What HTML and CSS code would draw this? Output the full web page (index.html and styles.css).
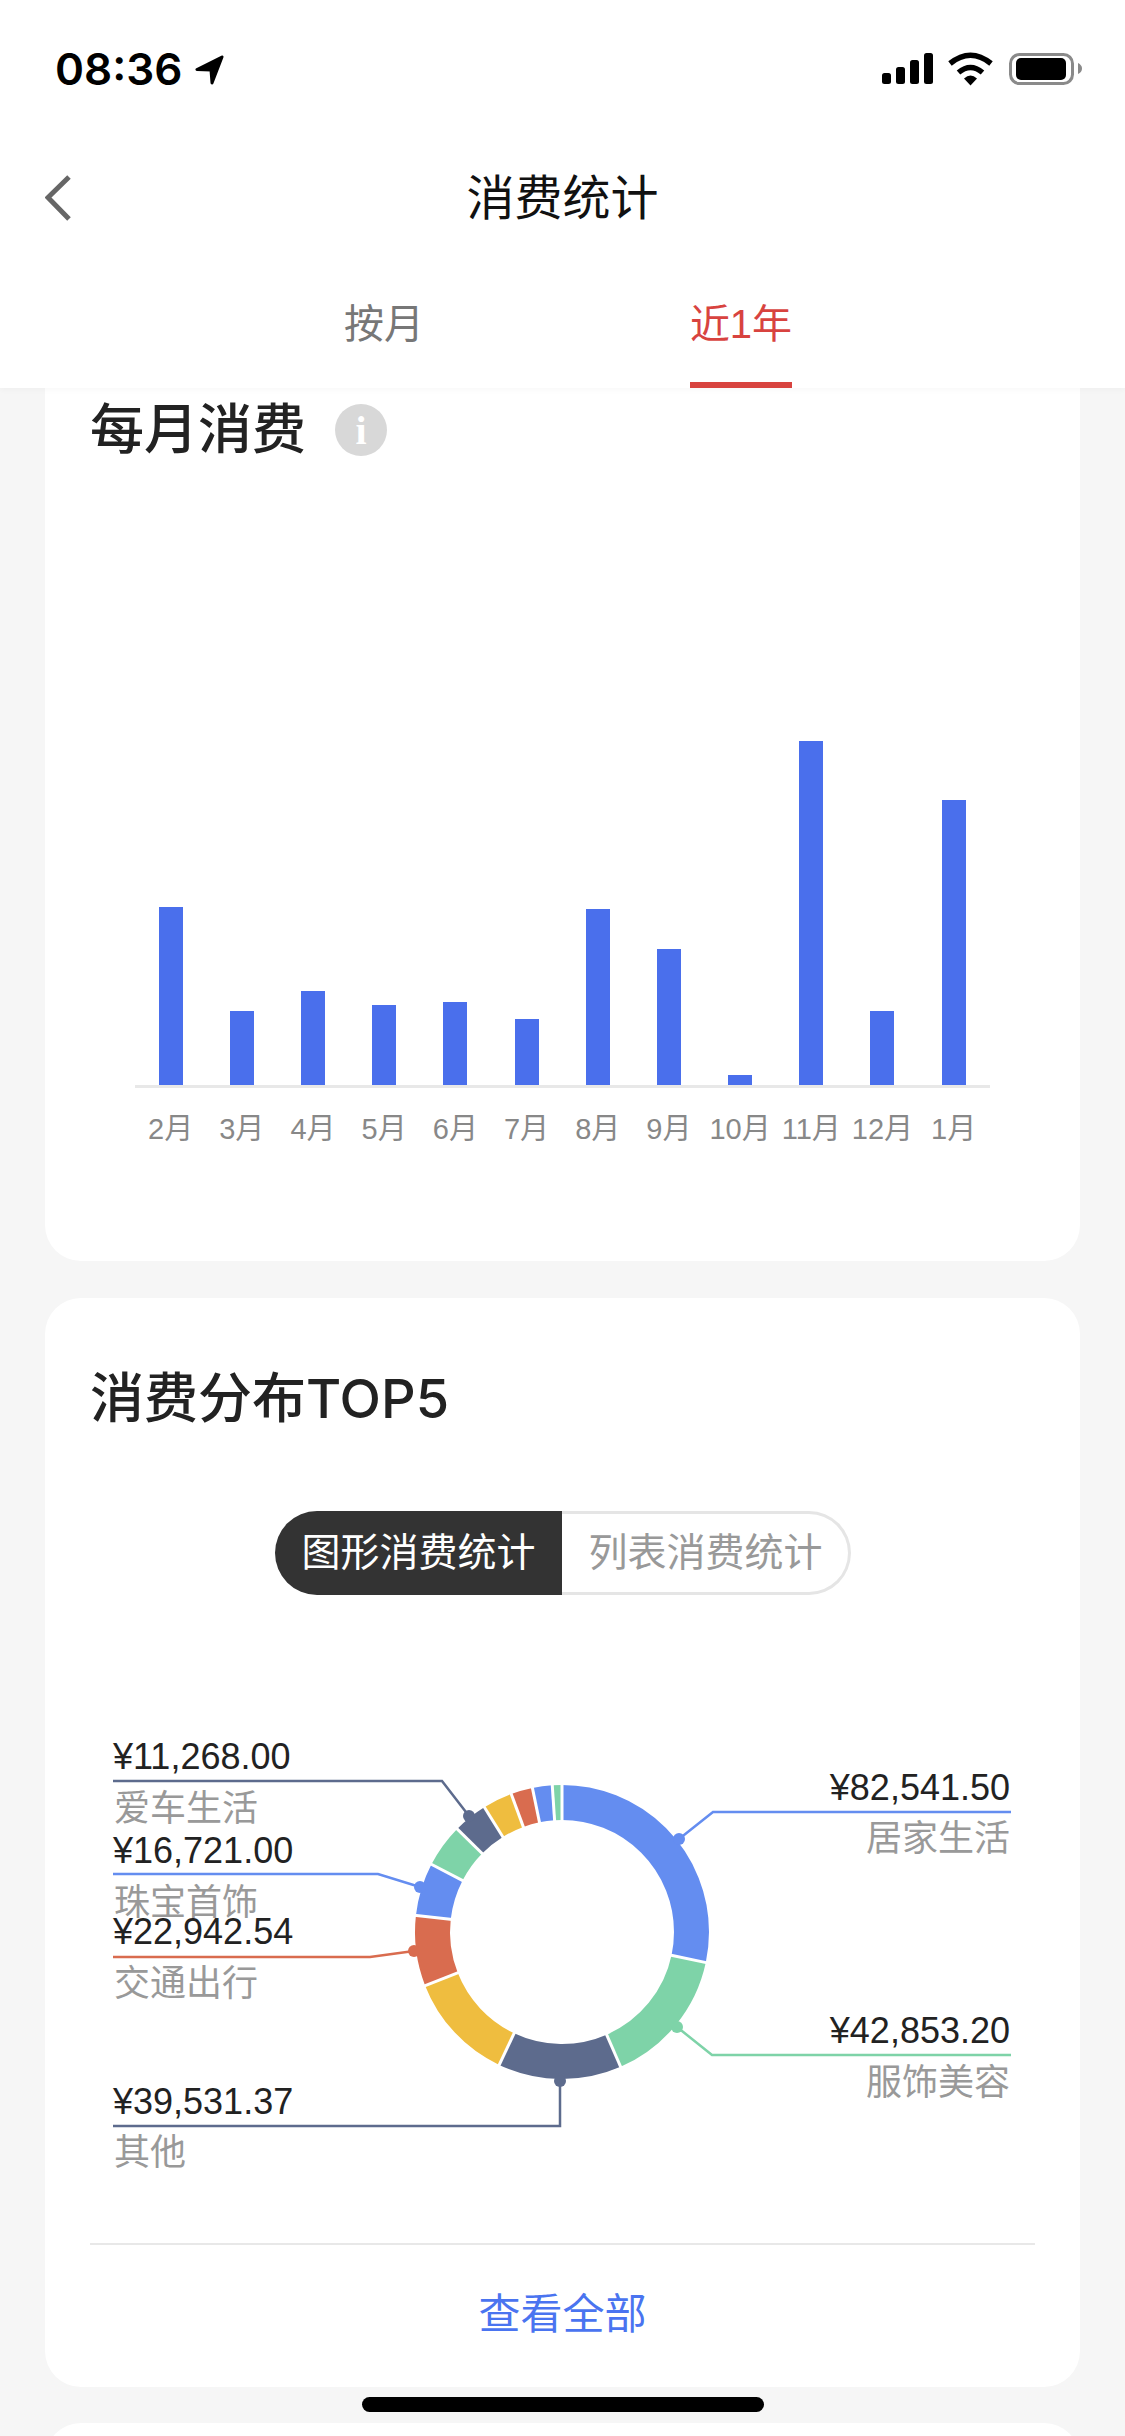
FILE: index.html
```html
<!DOCTYPE html>
<html lang="zh-CN">
<head>
<meta charset="utf-8">
<title>消费统计</title>
<link rel="stylesheet" href="styles.css">
</head>
<body>
<header class="top">
  <div class="status">
    <div class="clock">
      <span class="time">08:36</span>
      <svg class="loc" width="30" height="32" viewBox="0 0 30 32"><path d="M27 3 L2 15.500 L16 16 L17 29 Z" fill="#000" stroke="#000" stroke-width="3" stroke-linejoin="round"/></svg>
    </div>
    <svg class="sys" width="200" height="34" viewBox="882 52 200 34">
      <rect x="882" y="73" width="9" height="11" rx="2.500"/>
      <rect x="896" y="67" width="9" height="17" rx="2.500"/>
      <rect x="910" y="60" width="9" height="24" rx="2.500"/>
      <rect x="924" y="53" width="9" height="31" rx="2.500"/>
      <path d="M950 63.500 Q970.500 47 991 63.500" fill="none" stroke="#000" stroke-width="5.500"/>
      <path d="M958.500 72.500 Q970.500 62.500 982.500 72.500" fill="none" stroke="#000" stroke-width="5.500"/>
      <path d="M964 78.500 Q970.500 72.500 977 78.500 L970.500 85.500 Z"/>
      <rect x="1010.500" y="54.500" width="62" height="29" rx="9" fill="none" stroke="#8a8a8a" stroke-width="3"/>
      <rect x="1016" y="58" width="50" height="22" rx="5"/>
      <path d="M1078 63 Q1082 65 1082 68.500 Q1082 72 1078 74 Z" fill="#8a8a8a"/>
    </svg>
  </div>
  <nav class="nav">
    <svg class="back" width="30" height="50" viewBox="0 0 30 50"><path d="M24 4 L3 24.500 L24 46" fill="none" stroke="#666" stroke-width="5"/></svg>
    <h1 class="nav-title">消费统计</h1>
  </nav>
  <div class="tabs">
    <div class="tab"><span class="tab-label">按月</span></div>
    <div class="tab"><span class="tab-label is-active">近1年</span></div>
  </div>
</header>

<main>
  <section class="card card-monthly">
    <div class="card-head">
      <h2 class="card-title">每月消费</h2>
      <span class="info">i</span>
    </div>
    <div class="plot">
      <div class="col"><div class="bar" style="height:178px"></div></div>
      <div class="col"><div class="bar" style="height:74px"></div></div>
      <div class="col"><div class="bar" style="height:94px"></div></div>
      <div class="col"><div class="bar" style="height:80px"></div></div>
      <div class="col"><div class="bar" style="height:83px"></div></div>
      <div class="col"><div class="bar" style="height:66px"></div></div>
      <div class="col"><div class="bar" style="height:176px"></div></div>
      <div class="col"><div class="bar" style="height:136px"></div></div>
      <div class="col"><div class="bar" style="height:10px"></div></div>
      <div class="col"><div class="bar" style="height:344px"></div></div>
      <div class="col"><div class="bar" style="height:74px"></div></div>
      <div class="col"><div class="bar" style="height:285px"></div></div>
    </div>
    <div class="axis-labels">
      <span>2月</span><span>3月</span><span>4月</span><span>5月</span><span>6月</span><span>7月</span><span>8月</span><span>9月</span><span>10月</span><span>11月</span><span>12月</span><span>1月</span>
    </div>
  </section>

  <section class="card card-top">
    <h2 class="card-title card-title-top">消费分布<span class="latin">TOP5</span></h2>
    <div class="segments">
      <div class="segment is-on">图形消费统计</div>
      <div class="segment">列表消费统计</div>
    </div>
    <svg class="donut" width="1035" height="648" viewBox="45 1594 1035 648">
      <g fill="none" stroke-width="35">
        <circle class="s-blue" cx="562" cy="1931" r="129.500" pathLength="360" stroke-dasharray="102 360" transform="rotate(-90 562 1931)"/>
        <circle class="s-green" cx="562" cy="1931" r="129.500" pathLength="360" stroke-dasharray="54.500 360" transform="rotate(12 562 1931)"/>
        <circle class="s-slate" cx="562" cy="1931" r="129.500" pathLength="360" stroke-dasharray="48.800 360" transform="rotate(66.500 562 1931)"/>
        <circle class="s-yellow" cx="562" cy="1931" r="129.500" pathLength="360" stroke-dasharray="43.300 360" transform="rotate(115.300 562 1931)"/>
        <circle class="s-red" cx="562" cy="1931" r="129.500" pathLength="360" stroke-dasharray="27.900 360" transform="rotate(158.600 562 1931)"/>
        <circle class="s-blue" cx="562" cy="1931" r="129.500" pathLength="360" stroke-dasharray="20.900 360" transform="rotate(186.500 562 1931)"/>
        <circle class="s-green" cx="562" cy="1931" r="129.500" pathLength="360" stroke-dasharray="17.100 360" transform="rotate(207.400 562 1931)"/>
        <circle class="s-slate" cx="562" cy="1931" r="129.500" pathLength="360" stroke-dasharray="13.600 360" transform="rotate(224.500 562 1931)"/>
        <circle class="s-yellow" cx="562" cy="1931" r="129.500" pathLength="360" stroke-dasharray="11.700 360" transform="rotate(238.100 562 1931)"/>
        <circle class="s-red" cx="562" cy="1931" r="129.500" pathLength="360" stroke-dasharray="8.600 360" transform="rotate(249.800 562 1931)"/>
        <circle class="s-blue" cx="562" cy="1931" r="129.500" pathLength="360" stroke-dasharray="7.800 360" transform="rotate(258.400 562 1931)"/>
        <circle class="s-green" cx="562" cy="1931" r="129.500" pathLength="360" stroke-dasharray="3.800 360" transform="rotate(266.200 562 1931)"/>
      </g>
      <g class="gaps" transform="translate(562 1931)">
        <line y1="-108" y2="-151" transform="rotate(0)"/>
        <line y1="-108" y2="-151" transform="rotate(102)"/>
        <line y1="-108" y2="-151" transform="rotate(156.500)"/>
        <line y1="-108" y2="-151" transform="rotate(205.300)"/>
        <line y1="-108" y2="-151" transform="rotate(248.600)"/>
        <line y1="-108" y2="-151" transform="rotate(276.500)"/>
        <line y1="-108" y2="-151" transform="rotate(297.400)"/>
        <line y1="-108" y2="-151" transform="rotate(314.500)"/>
        <line y1="-108" y2="-151" transform="rotate(328.100)"/>
        <line y1="-108" y2="-151" transform="rotate(339.800)"/>
        <line y1="-108" y2="-151" transform="rotate(348.400)"/>
        <line y1="-108" y2="-151" transform="rotate(356.200)"/>
      </g>

      <g class="leader">
        <polyline class="l-slate" points="113,1780 442,1780 469,1815"/><circle class="f-slate" cx="469" cy="1815" r="6"/>
        <polyline class="l-blue" points="113,1873 378,1873 420,1886"/><circle class="f-blue" cx="420" cy="1886" r="6"/>
        <polyline class="l-red" points="113,1956 370,1956 414,1950"/><circle class="f-red" cx="414" cy="1950" r="6"/>
        <polyline class="l-slate" points="113,2125 560,2125 560,2080"/><circle class="f-slate" cx="560" cy="2080" r="6"/>
        <polyline class="l-blue" points="1011,1811 713,1811 679,1838"/><circle class="f-blue" cx="679" cy="1838" r="6"/>
        <polyline class="l-green" points="1011,2054 712,2054 677,2026"/><circle class="f-green" cx="677" cy="2026" r="6"/>
      </g>

      <text class="amt" x="113" y="1768">¥11,268.00</text>
      <text class="cat" x="114" y="1820">爱车生活</text>
      <text class="amt" x="113" y="1862">¥16,721.00</text>
      <text class="cat" x="114" y="1914">珠宝首饰</text>
      <text class="amt" x="113" y="1943">¥22,942.54</text>
      <text class="cat" x="114" y="1995">交通出行</text>
      <text class="amt" x="113" y="2113">¥39,531.37</text>
      <text class="cat" x="114" y="2164">其他</text>
      <text class="amt end" x="1010" y="1799">¥82,541.50</text>
      <text class="cat end" x="1010" y="1850">居家生活</text>
      <text class="amt end" x="1010" y="2042">¥42,853.20</text>
      <text class="cat end" x="1010" y="2094">服饰美容</text>
    </svg>
    <div class="card-foot"><a class="see-all">查看全部</a></div>
  </section>

  <section class="card card-next"></section>
</main>
<div class="home"></div>
</body>
</html>
```

FILE: styles.css
```css
* { box-sizing: border-box; }

html, body {
  margin: 0;
  padding: 0;
}

body {
  position: relative;
  width: 1125px;
  height: 2436px;
  overflow: hidden;
  background: #f6f6f6;
  font-family: "Liberation Sans", "Noto Sans CJK SC", sans-serif;
  color: #222;
}

/* header */
.top {
  position: relative;
  z-index: 2;
  height: 388px;
  background: #fff;
  box-shadow: 0 2px 6px rgba(0, 0, 0, 0.03);
}

.status {
  display: flex;
  justify-content: space-between;
  align-items: flex-start;
  height: 136px;
  padding: 52px 43px 0 55px;
}

.clock {
  display: flex;
  align-items: flex-start;
  gap: 13px;
}

.time {
  font-family: "Inter", sans-serif;
  font-size: 44px;
  font-weight: 600;
  line-height: 34px;
  color: #000;
}

.loc { margin-top: 2px; }

.nav {
  position: relative;
  display: flex;
  justify-content: center;
  align-items: center;
  height: 122px;
}

.back {
  position: absolute;
  left: 45px;
  top: 37px;
}

.nav-title {
  margin: 0;
  padding-top: 3px;
  font-size: 48px;
  font-weight: 400;
  line-height: 122px;
  color: #111;
}

.tabs {
  display: grid;
  grid-template-columns: 357px 357px;
  justify-content: center;
  height: 130px;
}

.tab {
  display: flex;
  justify-content: center;
}

.tab-label {
  height: 130px;
  padding-top: 38px;
  font-size: 40px;
  line-height: 56px;
  color: #777;
}

.tab-label.is-active {
  color: #d8433f;
  border-bottom: 6px solid #d8433f;
}

/* cards */
.card {
  margin: 0 45px;
  background: #fff;
  border-radius: 36px;
}

.card-title {
  margin: 0;
  font-size: 54px;
  font-weight: 500;
  line-height: 84px;
  color: #222;
}

.latin {
  font-family: "Inter", sans-serif;
  font-size: 54px;
}

.card-monthly {
  height: 873px;
  padding: 0 45px;
  border-radius: 0 0 36px 36px;
}

.card-head {
  display: flex;
  align-items: center;
  gap: 29px;
  height: 84px;
}

.info {
  display: flex;
  justify-content: center;
  align-items: center;
  width: 52px;
  height: 52px;
  border-radius: 50%;
  background: #d8d8d8;
  color: #fff;
  font-family: "Liberation Serif", serif;
  font-size: 40px;
  font-weight: 700;
}

.plot {
  display: grid;
  grid-template-columns: repeat(12, 71.200px);
  align-items: end;
  width: 855px;
  height: 616px;
  margin-left: 45px;
  border-bottom: 3px solid #e8e8e8;
}

.col {
  display: flex;
  justify-content: center;
}

.bar {
  width: 24px;
  background: #4a6fec;
}

.axis-labels {
  display: grid;
  grid-template-columns: repeat(12, 71.200px);
  width: 855px;
  margin-top: 21px;
  margin-left: 45px;
  font-size: 29px;
  line-height: 40px;
  text-align: center;
  color: #888;
}

.card-top {
  margin-top: 37px;
  height: 1089px;
  padding-top: 59px;
}

.card-title-top {
  padding-left: 45px;
}

.segments {
  display: flex;
  justify-content: center;
  margin-top: 70px;
}

.segment {
  width: 289px;
  height: 84px;
  padding-left: 27px;
  font-size: 39px;
  line-height: 78px;
  color: #999;
  border: 3px solid #e5e5e5;
  border-left: 0;
  border-radius: 0 42px 42px 0;
}

.segment.is-on {
  width: 287px;
  line-height: 84px;
  color: #fff;
  background: #333;
  border: 0;
  border-radius: 42px 0 0 42px;
}

.donut { display: block; }

.s-blue { stroke: #648df0; }
.s-green { stroke: #7ed3a8; }
.s-slate { stroke: #5d6b8d; }
.s-yellow { stroke: #efbd3f; }
.s-red { stroke: #d96c4f; }

.gaps line {
  stroke: #fff;
  stroke-width: 3;
}

.leader polyline {
  fill: none;
  stroke-width: 2.500;
}

.l-blue { stroke: #648df0; }
.l-green { stroke: #7ed3a8; }
.l-slate { stroke: #5d6b8d; }
.l-red { stroke: #d96c4f; }
.f-blue { fill: #648df0; }
.f-green { fill: #7ed3a8; }
.f-slate { fill: #5d6b8d; }
.f-red { fill: #d96c4f; }

.amt {
  font-family: "Liberation Sans", "Noto Sans CJK SC", sans-serif;
  font-size: 36px;
  fill: #222;
}

.cat {
  font-family: "Liberation Sans", "Noto Sans CJK SC", sans-serif;
  font-size: 36px;
  fill: #999;
}

.end { text-anchor: end; }

.card-foot {
  display: flex;
  justify-content: center;
  margin: 0 45px;
  height: 144px;
  border-top: 2px solid #e8e8e8;
}

.see-all {
  font-size: 42px;
  line-height: 140px;
  color: #4a74f0;
}

.card-next {
  margin-top: 36px;
  height: 200px;
}

.home {
  position: absolute;
  left: 362px;
  bottom: 24px;
  width: 402px;
  height: 15px;
  border-radius: 8px;
  background: #000;
}
```
